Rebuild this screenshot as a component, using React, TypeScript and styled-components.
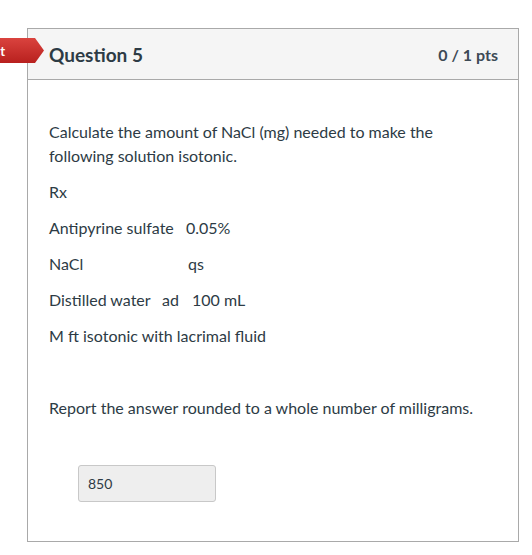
import React from "react";
import styled, { createGlobalStyle } from "styled-components";

const GlobalStyle = createGlobalStyle`
	html, body {
		margin: 0;
		padding: 0;
		background: #fff;
		overflow: hidden;
	}
	body {
		font-family: Lato, "Liberation Sans", Arial, sans-serif;
		color: #2d3b45;
	}
`;

const Page = styled.div`
	padding: 28px 0 0 27px;
`;

const Card = styled.div`
	position: relative;
	box-sizing: border-box;
	width: 492px;
	height: 514px;
	border: 1px solid #a9a9a9;
`;

// status flag sticking out past the left edge of the card, mostly off screen
const Badge = styled.div`
	position: absolute;
	top: 9px;
	right: calc(100% - 16px);
	height: 25px;
	display: flex;
	align-items: center;
	padding: 0 39px 0 8px;
	background: linear-gradient(#da433e, #b8201e);
	clip-path: polygon(0 0, calc(100% - 9px) 0, 100% 50%, calc(100% - 9px) 100%, 0 100%);
	color: #fff;
	font-size: 13px;
	font-weight: 700;
	white-space: nowrap;
`;

const Header = styled.div`
	box-sizing: border-box;
	height: 51px;
	display: flex;
	align-items: center;
	justify-content: space-between;
	padding: 0 20px 0 21px;
	background: #f5f5f5;
	border-bottom: 1px solid #a9a9a9;
`;

const Title = styled.h2`
	margin: 0;
	font-size: 19px;
	font-weight: 700;
	color: #2d3b45;
`;

const Points = styled.div`
	font-size: 16px;
	font-weight: 700;
	color: #3d4a55;
`;

const Body = styled.div`
	padding: 40px 21px 0 21px;
`;

const Para = styled.p`
	margin: 0 0 12px;
	font-size: 16px;
	line-height: 24px;
	min-height: 24px;
`;

const Cell = styled.span<{ $w: number }>`
	display: inline-block;
	width: ${(p) => p.$w}px;
`;

const AnswerBox = styled.div`
	margin: 45px 0 0 29px;
	box-sizing: border-box;
	width: 138px;
	height: 37px;
	display: flex;
	align-items: center;
	padding: 0 9px;
	background: #eeeeee;
	border: 1px solid #c8c8c8;
	border-radius: 3px;
	font-size: 14px;
	color: #2d3b45;
`;

export default function App() {
	return (
		<Page>
			<GlobalStyle />
			<Card>
				<Badge>Incorrect</Badge>
				<Header>
					<Title>Question 5</Title>
					<Points>0 / 1 pts</Points>
				</Header>
				<Body>
					<Para>
						Calculate the amount of NaCl (mg) needed to make the following solution
						isotonic.
					</Para>
					<Para>Rx</Para>
					<Para>
						<Cell $w={137}>Antipyrine sulfate</Cell>0.05%
					</Para>
					<Para>
						<Cell $w={139}>NaCl</Cell>qs
					</Para>
					<Para>
						<Cell $w={113}>Distilled water</Cell>
						<Cell $w={30}>ad</Cell>100 mL
					</Para>
					<Para>M ft isotonic with lacrimal fluid</Para>
					<Para />
					<Para>Report the answer rounded to a whole number of milligrams.</Para>
					<AnswerBox>850</AnswerBox>
				</Body>
			</Card>
		</Page>
	);
}
